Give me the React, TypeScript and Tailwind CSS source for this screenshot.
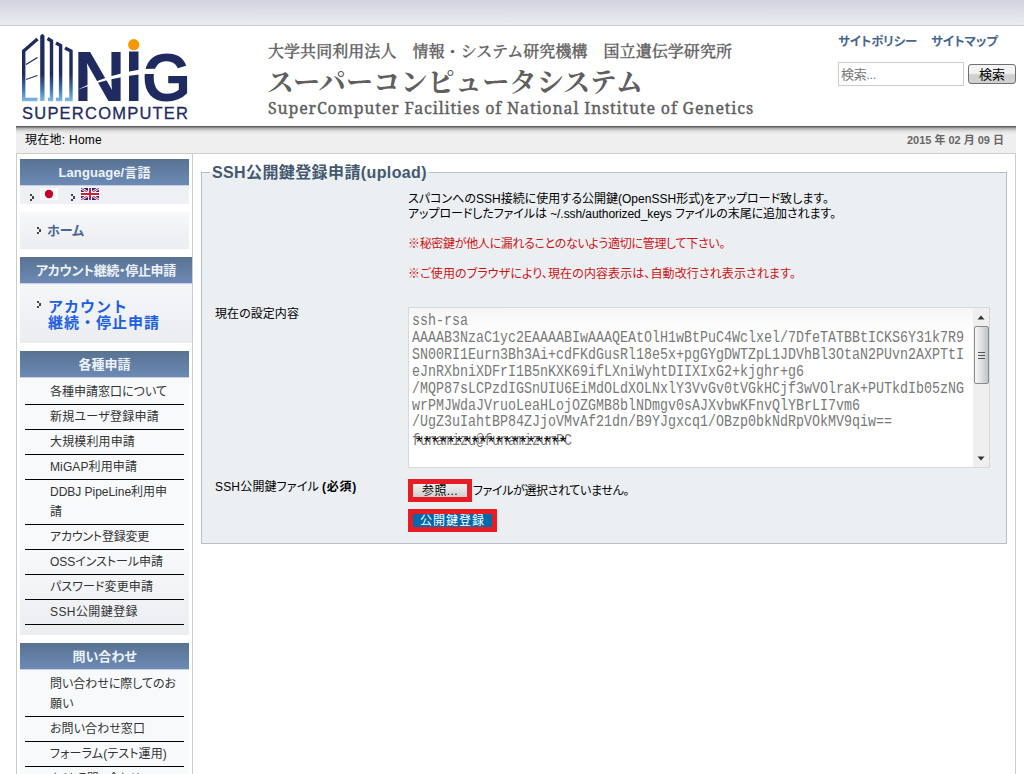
import { useLayoutEffect, useRef, useState } from "react";

const JP = "font-['Liberation_Sans','Noto_Sans_CJK_JP',sans-serif]";

/* One line of text whose letter spacing is measured so that it spans `w` pixels. */
function Fit({ text, w, wide = false, className = "" }: { text: string; w: number; wide?: boolean; className?: string }) {
  const ref = useRef<HTMLSpanElement>(null);
  const [space, setSpace] = useState(0);
  useLayoutEffect(() => {
    if (ref.current) {
      const natural = ref.current.getBoundingClientRect().width;
      setSpace((w - natural) / Array.from(text).length);
    }
  }, [text, w]);
  return (
    <span ref={ref} className={`inline-block whitespace-pre ${wide ? "" : "[font-feature-settings:'palt']"} ${className}`} style={{ letterSpacing: space }}>
      {text}
    </span>
  );
}

function Logo() {
  return (
    <svg className="block overflow-visible" width="170" height="90" viewBox="20 32 170 90" role="img" aria-label="NIG Supercomputer">
      <defs>
        <linearGradient id="tower" gradientUnits="userSpaceOnUse" x1="0" y1="34" x2="0" y2="101">
          <stop offset="0.6" stopColor="#1f2a5e" />
          <stop offset="0.82" stopColor="#3f74ad" />
          <stop offset="1" stopColor="#7fb9e6" />
        </linearGradient>
      </defs>
      <g fill="none" stroke="url(#tower)" strokeWidth="3.4">
        <path d="M37.500 39 L23.700 51 V99.500 H37.500" />
        <path d="M26 64.500 L37.500 57.500 M26 79.500 L37.500 75.500" strokeWidth="1.300" />
        <path d="M47.500 38.500 L51.500 41 V99.500 H48" />
        <path d="M56 43 L60.600 45.500 V99.500 H56" />
        <path d="M65 48 L71 51 V99.500 H65" />
      </g>
      <path d="M40.200 36 Q42.300 32 44.500 36 V101 H40.200 Z" fill="url(#tower)" />
      <g fill="#1f2a5e" fontFamily="'Liberation Sans',sans-serif" fontWeight="700">
        <text x="73.500" y="101" fontSize="71" textLength="52" lengthAdjust="spacingAndGlyphs">N</text>
        <text x="142" y="101" fontSize="69" textLength="49" lengthAdjust="spacingAndGlyphs">G</text>
      </g>
      <path d="M129 51.500 H138.500 V101 H129 Z" fill="#1f2a5e" />
      <circle cx="133.700" cy="44.700" r="5.600" fill="#f39800" />
      <path d="M77 90 Q108 74 143 69 L165 68.500 V74 L143 74 Q110 77 77 90 Z" fill="#fff" />
      <text x="22" y="119" fontSize="16.500" fill="#1f2a5e" stroke="#1f2a5e" strokeWidth="0.300" fontFamily="'Liberation Sans',sans-serif" textLength="166">SUPERCOMPUTER</text>
    </svg>
  );
}

function Arrow() {
  return (
    <svg width="5" height="7" viewBox="0 0 5 7" className="block shrink-0">
      <path d="M0 0H2V2H0ZM2 2H4V5H2ZM0 5H2V7H0Z" fill="#444" />
    </svg>
  );
}

function Japan() {
  return (
    <svg width="18" height="12" viewBox="0 0 18 12" className="block">
      <path d="M0 0H18V12H0Z" fill="#fff" />
      <circle cx="9" cy="6" r="4.200" fill="#c8002c" />
    </svg>
  );
}

function Britain() {
  return (
    <svg width="18" height="12" viewBox="0 0 18 12" className="block">
      <path d="M0 0H18V12H0Z" fill="#1d2f7c" />
      <path d="M0 0L18 12M18 0L0 12" stroke="#fff" strokeWidth="2.400" />
      <path d="M0 0L18 12M18 0L0 12" stroke="#cf1b36" strokeWidth="1" />
      <path d="M9 0V12M0 6H18" stroke="#fff" strokeWidth="4" />
      <path d="M9 0V12M0 6H18" stroke="#cf1b36" strokeWidth="2" />
    </svg>
  );
}

function Heading({ text, w }: { text: string; w: number }) {
  return (
    <h3 className="flex h-[27px] items-center justify-center border-b border-[#c5d0e0] bg-gradient-to-b from-[#587291] to-[#6c8ab5] pt-px text-[13px] leading-[20px] font-bold text-[#edf3fa]">
      <Fit text={text} w={w} />
    </h3>
  );
}

type Line = [string, number];

function Menu({ rows }: { rows: Line[][] }) {
  return (
    <ul className="px-[5px]">
      {rows.map((row, i) => (
        <li key={i} className="border-b border-black py-[2px] pl-[25px] text-[12px] text-[#333]">
          {row.map(([text, w]) => (
            <div key={text} className="h-5 leading-[20px]"><Fit text={text} w={w} /></div>
          ))}
        </li>
      ))}
    </ul>
  );
}

const applications: Line[][] = [
  [["各種申請窓口について", 117]],
  [["新規ユーザ登録申請", 109]],
  [["大規模利用申請", 85]],
  [["MiGAP利用申請", 87]],
  [["DDBJ PipeLine利用申", 117], ["請", 12]],
  [["アカウント登録変更", 99]],
  [["OSSインストール申請", 113]],
  [["パスワード変更申請", 103]],
  [["SSH公開鍵登録", 88]],
];

const inquiries: Line[][] = [
  [["問い合わせに際してのお", 126], ["願い", 24]],
  [["お問い合わせ窓口", 95]],
  [["フォーラム(テスト運用)", 117]],
  [["よくある問い合わせ", 90]],
];

const keyLines = [
  "ssh-rsa",
  "AAAAB3NzaC1yc2EAAAABIwAAAQEAtOlH1wBtPuC4Wclxel/7DfeTATBBtICKS6Y31k7R9",
  "SN00RI1Eurn3Bh3Ai+cdFKdGusRl18e5x+pgGYgDWTZpL1JDVhBl3OtaN2PUvn2AXPTtI",
  "eJnRXbniXDFrI1B5nKXK69ifLXniWyhtDIIXIxG2+kjghr+g6",
  "/MQP87sLCPzdIGSnUIU6EiMdOLdXOLNxlY3VvGv0tVGkHCjf3wVOlraK+PUTkdIb05zNG",
  "wrPMJWdaJVruoLeaHLojOZGMB8blNDmgv0sAJXvbwKFnvQlYBrLI7vm6",
  "/UgZ3uIahtBP84ZJjoVMvAf21dn/B9YJgxcq1/OBzp0bkNdRpVOkMV9qiw==",
  "funamizu@funamizunPC",
];

function Sidebar() {
  return (
    <aside className="flex w-[177px] shrink-0 flex-col gap-2 border-x border-[#ccc] pt-[5px] pl-[3px]">
      <section className="h-[45px] w-[169px] bg-[#eef0f3]">
        <Heading text="Language/言語" w={92} />
        <div className="flex pt-[2px] pl-[10px]">
          <div className="pt-[6px]"><Arrow /></div>
          <div className="ml-[5px]"><Japan /></div>
          <div className="ml-[13px] pt-[6px]"><Arrow /></div>
          <div className="ml-[5px]"><Britain /></div>
        </div>
      </section>
      <section className="flex h-[37px] w-[169px] items-center bg-gradient-to-b from-[#f7f8fa] to-[#ebedf0] pl-[17px]">
        <Arrow />
        <Fit text="ホーム" w={37} className="ml-[5px] text-[13px] leading-[20px] font-bold text-[#4a6690]" />
      </section>
      <section className="h-[86px] w-[172px] bg-gradient-to-b from-[#f9fafc] to-[#ebedf0]">
        <Heading text="アカウント継続・停止申請" w={140} />
        <div className="flex pt-[15px] pl-[17px]">
          <div className="pt-[2px]"><Arrow /></div>
          <div className="ml-[6px] text-[15px] leading-[16px] font-bold text-[#1c5fe0]">
            <div className="h-4"><Fit text="アカウント" w={80} wide /></div>
            <div className="h-4"><Fit text="継続・停止申請" w={112} wide /></div>
          </div>
        </div>
      </section>
      <section className="h-[284px] w-[169px] bg-gradient-to-b from-[#f7f9fb] from-70% to-[#ebedf0]">
        <Heading text="各種申請" w={52} />
        <div className="pt-[2px]"><Menu rows={applications} /></div>
      </section>
      <section className="w-[169px] bg-[#f7f9fb]">
        <Heading text="問い合わせ" w={64} />
        <div className="pt-[2px]"><Menu rows={inquiries} /></div>
      </section>
    </aside>
  );
}

function KeyBox() {
  return (
    <div className="flex h-[161px] w-[582px] border border-[#d5d8dc] bg-white">
      <div className="relative h-full w-[564px] overflow-hidden bg-gradient-to-b from-[#f5f5f5] to-white to-15% pt-[4px] pl-[3px]">
        <div className="origin-top-left scale-y-[1.3] font-['Liberation_Mono',monospace] text-[13.33px] leading-[13.08px] whitespace-pre text-[#787878]">
          {keyLines.map((line) => <div key={line}>{line}</div>)}
        </div>
        <div className="absolute top-[126px] left-[5px] font-['Liberation_Mono',monospace] text-[17px] leading-[20px] text-black">
          <Fit text="*******************" w={152} />
        </div>
      </div>
      <div className="flex w-[16px] flex-col items-center bg-[#efefef]">
        <svg width="8" height="5" viewBox="0 0 8 5" className="mt-[7px] block"><path d="M0.500 4.500L4 0.500L7.500 4.500Z" fill="#333" /></svg>
        <div className="mt-[6px] flex h-[58px] w-[15px] flex-col items-center justify-center gap-[2px] rounded-[2px] border border-[#8b8b8b] bg-gradient-to-r from-[#f6f6f6] via-[#dfdfe1] to-[#c0c2c6]">
          <i className="h-px w-[7px] bg-[#555]" />
          <i className="h-px w-[7px] bg-[#555]" />
          <i className="h-px w-[7px] bg-[#555]" />
        </div>
        <svg width="8" height="5" viewBox="0 0 8 5" className="mt-auto mb-[6px] block"><path d="M0.500 0.500L4 4.500L7.500 0.500Z" fill="#333" /></svg>
      </div>
    </div>
  );
}

function KeyForm() {
  return (
    <fieldset className="mt-[8px] ml-[8px] h-[382px] w-[806px] border border-[#b4c0cc] bg-[#ebeff2] text-[12px] leading-[15px] text-black">
      <legend className="ml-[8px] h-[20px] px-[2px] text-[16px] leading-[21px] font-bold text-[#44596f]">
        <Fit text="SSH公開鍵登録申請(upload)" w={215} />
      </legend>
      <div className="grid grid-cols-[193px_1fr] pl-[13px]">
        <div />
        <div className="h-[125px] pt-[10px]">
          <p><Fit text="スパコンへのSSH接続に使用する公開鍵(OpenSSH形式)をアップロード致します。" w={421} /></p>
          <p><Fit text="アップロードしたファイルは ~/.ssh/authorized_keys ファイルの末尾に追加されます。" w={428} /></p>
          <p className="mt-[15px] text-[#cc1414]"><Fit text="※秘密鍵が他人に漏れることのないよう適切に管理して下さい。" w={317} /></p>
          <p className="mt-[15px] text-[#cc1414]"><Fit text="※ご使用のブラウザにより、現在の内容表示は、自動改行され表示されます。" w={388} /></p>
        </div>
        <div><Fit text="現在の設定内容" w={84} /></div>
        <KeyBox />
        <div className="pt-[12px]">
          <Fit text="SSH公開鍵ファイル" w={104} />
          <Fit text="(必須)" w={35} className="ml-[3px] font-bold" />
        </div>
        <div className="pt-[11px]">
          <div className="flex items-center">
            <button className="flex h-[23px] w-[64px] items-center justify-center border-[5px] border-[#e81c24] bg-gradient-to-b from-[#f2f2f2] to-[#cfcfcf] pt-px leading-[13px]">
              <Fit text="参照..." w={36} />
            </button>
            <Fit text="ファイルが選択されていません。" w={156} className="ml-[1px] pt-px" />
          </div>
          <button className="mt-[7px] flex h-[23px] w-[89px] items-center justify-center border-[5px] border-[#e81c24] bg-[#0069a8] pt-px leading-[13px] text-white">
            <Fit text="公開鍵登録" w={65} />
          </button>
        </div>
      </div>
    </fieldset>
  );
}

export default function App() {
  return (
    <div className={`h-[774px] w-[1024px] overflow-hidden bg-white ${JP}`}>
      <div className="h-[26px] border-b border-[#c8ccd1] bg-gradient-to-b from-[#d2d3df] to-[#ebecf1]" />
      <header className="flex h-[100px] pl-[20px]">
        <div className="w-[248px] pt-[6px]"><Logo /></div>
        <div className="w-[570px] text-[#5f5f5f]">
          <div className="mt-[13px] h-[25px] font-['Noto_Serif_CJK_JP','Noto_Sans_CJK_JP',serif] text-[16px] leading-[24px] font-medium [-webkit-text-stroke:0.3px_#5f5f5f]">
            <Fit text="大学共同利用法人　情報・システム研究機構　国立遺伝学研究所" w={464} wide />
          </div>
          <div className="h-[34px] font-['Noto_Serif_CJK_JP','Noto_Sans_CJK_JP',serif] text-[27px] leading-[34px] font-bold">
            <Fit text="スーパーコンピュータシステム" w={376} wide className="-ml-px" />
          </div>
          <div className="h-[20px] font-['Noto_Serif','DejaVu_Serif',serif] text-[16px] leading-[20px] [-webkit-text-stroke:0.4px_#5f5f5f]">
            <Fit text="SuperComputer Facilities of National Institute of Genetics" w={486} />
          </div>
        </div>
        <div className="pt-[6px]">
          <nav className="flex h-[20px] gap-[14px] text-[12.5px] leading-[20px] font-bold text-[#4a6690]">
            <Fit text="サイトポリシー" w={79} />
            <Fit text="サイトマップ" w={67} />
          </nav>
          <div className="mt-[10px] flex w-[178px] gap-[4px]">
            <div className="h-[24px] w-[126px] border border-[#ccc] px-[2px] text-[13px] leading-[23px] text-[#777]"><Fit text="検索..." w={35} /></div>
            <button className="mt-[2px] h-[20px] w-[48px] rounded-[3px] border border-[#707070] bg-gradient-to-b from-[#f3f3f3] from-45% to-[#d0d0d0] to-55% text-[13px] leading-[19px] text-black"><Fit text="検索" w={26} /></button>
          </div>
        </div>
      </header>
      <div className="ml-[16px] flex h-[27px] w-[1000px] items-center justify-between bg-[linear-gradient(to_bottom,#555_0,#666_1px,#aaa_2px,#ddd_5px,#efefef_8px)] pr-[12px] pl-[9px]">
        <Fit text="現在地: Home" w={77} className="text-[12px] leading-[20px] text-black" />
        <Fit text="2015 年 02 月 09 日" w={97} className="text-[11px] leading-[20px] font-bold text-[#666]" />
      </div>
      <main className="ml-[16px] flex h-[700px] w-[1000px] border-t border-r border-[#ccc]">
        <Sidebar />
        <KeyForm />
      </main>
    </div>
  );
}
